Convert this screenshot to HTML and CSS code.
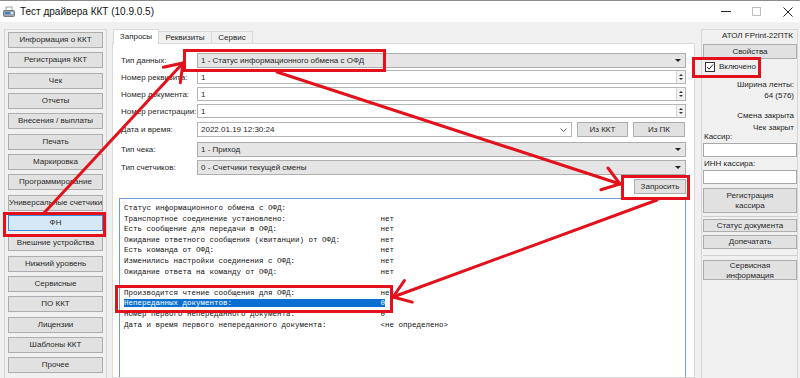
FILE: index.html
```html
<!DOCTYPE html>
<html lang="ru">
<head>
<meta charset="utf-8">
<title>Тест драйвера ККТ (10.9.0.5)</title>
<link rel="stylesheet" href="styles.css">
</head>
<body>
<div class="window">
  <div class="titlebar">
    <svg class="app-icon" width="12" height="12" viewBox="0 0 12 12">
      <rect x="3" y="1" width="6" height="4" fill="#fff" stroke="#8a8a8a" stroke-width="0.8"/>
      <rect x="0.5" y="4.5" width="11" height="6" rx="1" fill="#9aa3ad" stroke="#5f6770" stroke-width="0.8"/>
      <rect x="2" y="6" width="5" height="2" fill="#3d7fc4"/>
      <rect x="8" y="6" width="2" height="2" fill="#e8e8e8"/>
    </svg>
    <span class="title">Тест драйвера ККТ (10.9.0.5)</span>
    <div class="controls">
      <span class="ctl"><span class="ctl-min"></span></span>
      <span class="ctl"><span class="ctl-max"></span></span>
      <span class="ctl">
        <svg width="10" height="10" viewBox="0 0 10 10"><path d="M0.5 0.5 L9.5 9.5 M9.5 0.5 L0.5 9.5" stroke="#222" stroke-width="1"/></svg>
      </span>
    </div>
  </div>

  <div class="main">
    <div class="nav">
      <button class="btn navbtn">Информация о ККТ</button>
      <button class="btn navbtn">Регистрация ККТ</button>
      <button class="btn navbtn">Чек</button>
      <button class="btn navbtn">Отчеты</button>
      <button class="btn navbtn">Внесения / выплаты</button>
      <button class="btn navbtn">Печать</button>
      <button class="btn navbtn">Маркировка</button>
      <button class="btn navbtn">Программирование</button>
      <button class="btn navbtn">Универсальные счетчики</button>
      <button class="btn navbtn active">ФН</button>
      <button class="btn navbtn">Внешние устройства</button>
      <button class="btn navbtn">Нижний уровень</button>
      <button class="btn navbtn">Сервисные</button>
      <button class="btn navbtn">ПО ККТ</button>
      <button class="btn navbtn">Лицензии</button>
      <button class="btn navbtn">Шаблоны ККТ</button>
      <button class="btn navbtn">Прочее</button>
    </div>

    <div class="tabs">
      <div class="tabbar">
        <div class="tab active tab-w1">Запросы</div>
        <div class="tab tab-w2">Реквизиты</div>
        <div class="tab tab-w3">Сервис</div>
      </div>
      <div class="tabpage">
        <div class="form">
          <div class="row h15">
            <span class="lbl">Тип данных:</span>
            <div class="field combo">1 - Статус информационного обмена с ОФД<span class="dd"></span></div>
          </div>
          <div class="row h14 mt2">
            <span class="lbl">Номер реквизита:</span>
            <div class="field spin">1<span class="spinbtn"><span class="up"></span><span class="down"></span></span></div>
          </div>
          <div class="row h14 mt3">
            <span class="lbl">Номер документа:</span>
            <div class="field spin">1<span class="spinbtn"><span class="up"></span><span class="down"></span></span></div>
          </div>
          <div class="row h14 mt3">
            <span class="lbl">Номер регистрации:</span>
            <div class="field spin">1<span class="spinbtn"><span class="up"></span><span class="down"></span></span></div>
          </div>
          <div class="row h15 mt4">
            <span class="lbl">Дата и время:</span>
            <div class="field date">2022.01.19 12:30:24
              <svg class="chev" width="7" height="4" viewBox="0 0 7 4"><path d="M0.5 0.5 L3.5 3.5 L6.5 0.5" fill="none" stroke="#555" stroke-width="0.9"/></svg>
            </div>
            <button class="btn smallbtn b-kkt">Из ККТ</button>
            <button class="btn smallbtn b-pc">Из ПК</button>
          </div>
          <div class="row h15 mt5">
            <span class="lbl">Тип чека:</span>
            <div class="field combo">1 - Приход<span class="dd"></span></div>
          </div>
          <div class="row h15 mt3">
            <span class="lbl">Тип счетчиков:</span>
            <div class="field combo">0 - Счетчики текущей смены<span class="dd"></span></div>
          </div>
        </div>
        <div class="actions"><button class="btn reqbtn">Запросить</button></div>
        <div class="output"><pre class="log">Статус информационного обмена с ОФД:
Транспортное соединение установлено:                     нет
Есть сообщение для передачи в ОФД:                       нет
Ожидание ответного сообщения (квитанции) от ОФД:         нет
Есть команда от ОФД:                                     нет
Изменились настройки соединения с ОФД:                   нет
Ожидание ответа на команду от ОФД:                       нет

Производится чтение сообщения для ОФД:                   нет
<span class="sel">Непереданных документов:                                 0</span>
Номер первого непереданного документа:                   0
Дата и время первого непереданного документа:            &lt;не определено&gt;</pre></div>
      </div>
    </div>

    <div class="side">
      <div class="dev">АТОЛ FPrint-22ПТК</div>
      <button class="btn sidebtn props">Свойства</button>
      <div class="check">
        <span class="box"><svg width="8" height="8" viewBox="0 0 8 8"><path d="M1 4 L3 6.2 L7 1.5" fill="none" stroke="#222" stroke-width="1"/></svg></span>
        <span>Включено</span>
      </div>
      <div class="info i1">Ширина ленты:</div>
      <div class="info">64 (576)</div>
      <div class="info i2">Смена закрыта</div>
      <div class="info tight">Чек закрыт</div>
      <div class="cap tight">Кассир:</div>
      <div class="input"></div>
      <div class="cap c2">ИНН кассира:</div>
      <div class="input"></div>
      <button class="btn sidebtn twoline reg">Регистрация<br>кассира</button>
      <div class="sep"></div>
      <button class="btn sidebtn st">Статус документа</button>
      <button class="btn sidebtn dp">Допечатать</button>
      <div class="sep s2"></div>
      <button class="btn sidebtn twoline svc">Сервисная<br>информация</button>
    </div>
  </div>

  <svg class="annot" width="800" height="378" viewBox="0 0 800 378">
    <g fill="none" stroke="#e3111b" stroke-width="3" stroke-linejoin="miter" stroke-linecap="round">
      <rect x="184.5" y="50.5" width="200" height="20"/>
      <rect x="693.5" y="58.5" width="66" height="18"/>
      <rect x="622.5" y="176.5" width="66" height="22"/>
      <rect x="4.5" y="213.5" width="100" height="22"/>
      <rect x="116.5" y="286.5" width="275" height="25"/>
      <path d="M44 213 L183 63"/>
      <path d="M163.4 67.2 L183 63 L180.3 82.8"/>
      <path d="M277 72 L620 184"/>
      <path d="M608 168 L620 184 L600.9 189.8"/>
      <path d="M657 200 L393 297"/>
      <path d="M412.3 302.1 L393 297 L404.4 280.6"/>
    </g>
  </svg>
</div>
</body>
</html>
```

FILE: styles.css
```css
* { box-sizing: border-box; }

body {
  margin: 0;
  background: #f0f0f0;
  font-family: "Liberation Sans", Arial, sans-serif;
  font-size: 8px;
  color: #262626;
}

.window {
  position: relative;
  width: 800px;
  height: 378px;
  overflow: hidden;
  background: #f0f0f0;
}

/* title bar */
.titlebar {
  height: 22px;
  background: #fff;
  border-top: 1px solid #8c8c8c;
  display: flex;
  align-items: center;
  padding-left: 3px;
}
.app-icon { flex: none; }
.title {
  margin-left: 5px;
  font-size: 10px;
  color: #111;
}
.controls {
  margin-left: auto;
  margin-right: -3px;
  display: flex;
  height: 100%;
}
.ctl {
  width: 31px;
  display: flex;
  align-items: center;
  justify-content: center;
}
.ctl-min {
  width: 10px;
  height: 1px;
  background: #222;
}
.ctl-max {
  width: 9px;
  height: 9px;
  border: 1px solid #bdbdbd;
}

/* layout */
.main {
  display: flex;
  height: 356px;
  padding-top: 7px;
}

.btn {
  font: inherit;
  color: #2a2a2a;
  background: #e1e1e1;
  border: 1px solid #adadad;
  padding: 0;
  margin: 0;
  line-height: 1;
  text-align: center;
}

/* left navigation */
.nav {
  margin-left: 4px;
  width: 103px;
  height: 380px;
  border: 1px solid #d6d6d6;
  padding: 2px 3px;
  display: flex;
  flex-direction: column;
  gap: 4.34px;
  flex: none;
}
.navbtn {
  height: 16px;
  flex: none;
  font-size: 8px;
  white-space: nowrap;
  overflow: hidden;
}
.navbtn.active {
  background: #d5e8f8;
  border-color: #3d8bd6;
}

/* tabs */
.tabs {
  margin-left: 5px;
  width: 583px;
  flex: none;
  display: flex;
  flex-direction: column;
}
.tabbar {
  height: 14px;
  display: flex;
  align-items: flex-end;
  padding-left: 2px;
}
.tab {
  height: 12px;
  border: 1px solid #d9d9d9;
  border-bottom: none;
  background: #f0f0f0;
  line-height: 11px;
  text-align: center;
  margin-left: -1px;
}
.tab.active {
  height: 15px;
  background: #fff;
  position: relative;
  z-index: 1;
  margin-bottom: -1px;
  line-height: 13px;
}
.tab-w1 { width: 46px; }
.tab-w2 { width: 54px; }
.tab-w3 { width: 42px; }

.tabpage {
  flex: 1;
  background: #fff;
  border: 1px solid #d9d9d9;
  padding: 9px 8px 0 8px;
  overflow: hidden;
}

.form { display: flex; flex-direction: column; }
.row {
  display: flex;
  align-items: stretch;
}
.h14 { height: 14px; }
.h15 { height: 15px; }
.mt2 { margin-top: 2px; }
.mt3 { margin-top: 3px; }
.mt4 { margin-top: 4px; }
.mt5 { margin-top: 5px; }

.lbl {
  width: 76px;
  flex: none;
  display: flex;
  align-items: center;
  white-space: nowrap;
}
.field {
  flex: 1;
  display: flex;
  align-items: center;
  padding-left: 3px;
  white-space: nowrap;
  position: relative;
}
.combo {
  background: #e5e5e5;
  border: 1px solid #adadad;
}
.dd {
  margin-left: auto;
  margin-right: 4px;
  width: 0;
  height: 0;
  border-left: 3px solid transparent;
  border-right: 3px solid transparent;
  border-top: 3px solid #222;
}
.spin {
  background: #fff;
  border: 1px solid #b5b5b5;
}
.spinbtn {
  margin-left: auto;
  width: 9px;
  height: 100%;
  border-left: 1px solid #d8d8d8;
  display: flex;
  flex-direction: column;
  align-items: center;
  justify-content: center;
  gap: 2px;
  background: #f2f2f2;
}
.up {
  width: 0; height: 0;
  border-left: 2px solid transparent;
  border-right: 2px solid transparent;
  border-bottom: 2px solid #333;
}
.down {
  width: 0; height: 0;
  border-left: 2px solid transparent;
  border-right: 2px solid transparent;
  border-top: 2px solid #333;
}
.date {
  flex: none;
  width: 375px;
  background: #fff;
  border: 1px solid #b5b5b5;
}
.chev {
  margin-left: auto;
  margin-right: 4px;
}
.smallbtn {
  flex: none;
  height: 15px;
}
.b-kkt { width: 51px; margin-left: 5px; }
.b-pc { width: 52px; margin-left: 5px; }

.actions {
  display: flex;
  justify-content: flex-end;
  margin-top: 4px;
}
.reqbtn {
  width: 52px;
  height: 15px;
}

.output {
  margin-top: 4px;
  margin-left: -2px;
  height: 200px;
  border: 1px solid #6d9ed6;
  padding: 4px 0 0 4px;
  background: #fff;
}
.log {
  margin: 0;
  font-family: "Liberation Mono", "Courier New", monospace;
  font-size: 7.5px;
  line-height: 10.6px;
  color: #111;
}
.sel {
  background: #0a6fd0;
  color: #fff;
}

/* right panel */
.side {
  margin-left: 6px;
  width: 97px;
  height: 380px;
  flex: none;
  border: 1px solid #d6d6d6;
  padding: 0 2px 0 1px;
  display: flex;
  flex-direction: column;
}
.dev {
  height: 13px;
  line-height: 12px;
  text-align: right;
  padding-right: 2px;
  white-space: nowrap;
}
.sidebtn {
  flex: none;
  width: 94px;
  height: 15px;
}
.props { margin-top: 1px; }
.check {
  margin-top: 2px;
  height: 11px;
  display: flex;
  align-items: center;
  padding-left: 2px;
  gap: 4px;
}
.box {
  width: 10px;
  height: 10px;
  border: 1px solid #333;
  background: #fff;
  display: flex;
  align-items: center;
  justify-content: center;
}
.info {
  height: 11px;
  line-height: 11px;
  text-align: right;
  padding-right: 1px;
  white-space: nowrap;
}
.i1 { margin-top: 7px; }
.i2 { margin-top: 9px; }
.tight {
  height: 9px;
  line-height: 9px;
}
.info.tight { margin-top: 2px; }
.cap {
  padding-left: 1px;
  white-space: nowrap;
}
.c2 {
  margin-top: 2px;
  height: 9px;
  line-height: 9px;
}
.input {
  margin-top: 2px;
  height: 14px;
  width: 94px;
  background: #fff;
  border: 1px solid #a9a9a9;
}
.twoline {
  line-height: 10px;
}
.reg { margin-top: 4px; height: 25px; }
.sep {
  margin-top: 3px;
  height: 1px;
  width: 94px;
  background: #cfcfcf;
}
.st { margin-top: 2px; height: 13px; }
.dp { margin-top: 3px; height: 14px; }
.s2 { margin-top: 6px; }
.svc { margin-top: 4px; height: 20px; }

/* annotation overlay */
.annot {
  position: absolute;
  left: 0;
  top: 0;
  pointer-events: none;
}
```
